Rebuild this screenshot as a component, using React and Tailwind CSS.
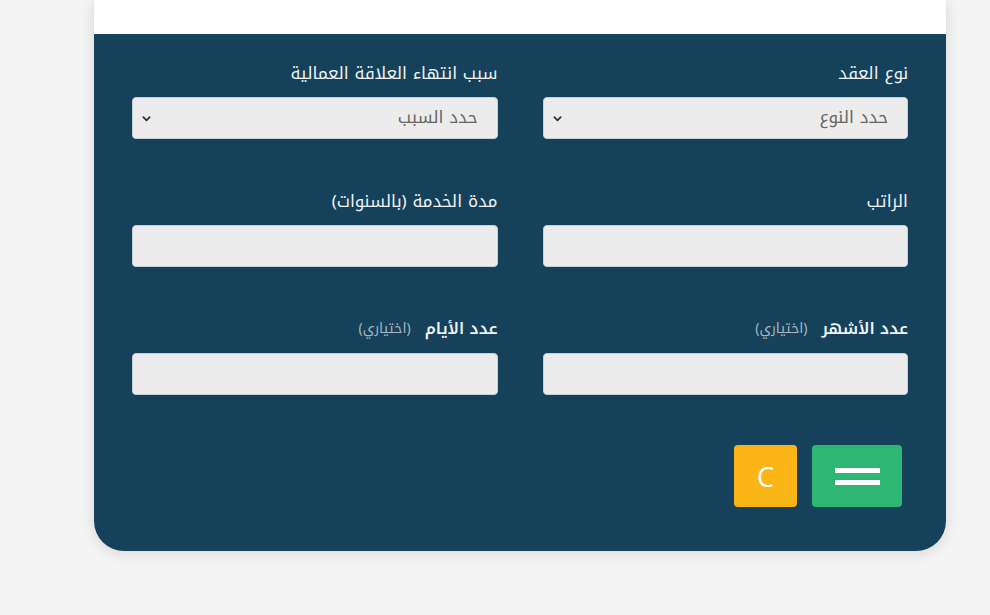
import React from 'react';

const font = { fontFamily: '"Noto Kufi Arabic", "Noto Sans Arabic", "DejaVu Sans", sans-serif' };

function Chevron() {
  return (
    <svg className="w-[9px] h-[9px] text-[#333]" viewBox="0 0 10 10" fill="none" stroke="currentColor">
      <path d="M1.5 3.5 5 7l3.5-3.5" strokeWidth={2} strokeLinecap="round" strokeLinejoin="round" />
    </svg>
  );
}

function Label({ text, optional }) {
  return (
    <div className="h-[20px] mb-[14px] flex items-center gap-[14px] text-[17px] leading-[20px] text-[#eef3f6]">
      <span className={optional ? 'font-semibold text-[16px]' : ''}>{text}</span>
      {optional && <span className="text-[14px] text-[#a9b6bf]">(اختياري)</span>}
    </div>
  );
}

function SelectField({ label, placeholder }) {
  return (
    <div>
      <Label text={label} />
      <div className="h-[42px] rounded-[4px] border border-[#c9ced2] bg-[#ececec] flex items-center justify-between pr-[19px] pl-[9px]">
        <span className="text-[17px] text-[#666]">{placeholder}</span>
        <Chevron />
      </div>
    </div>
  );
}

function InputField({ label, optional }) {
  return (
    <div>
      <Label text={label} optional={optional} />
      <input
        type="text"
        className="block w-full h-[42px] rounded-[4px] border border-[#c9ced2] bg-[#ececec] outline-none"
      />
    </div>
  );
}

export default function App() {
  return (
    <div className="min-h-screen bg-[#f4f4f4]" style={font}>
      <div className="ml-[94px] w-[852px] rounded-b-[30px] shadow-[0_2px_14px_rgba(0,0,0,0.12)] overflow-hidden">
        <div className="h-[34px] bg-white" />
        <div dir="rtl" className="bg-[#15415a] pt-[29px] pb-[44px] px-[38px]">
          <div className="grid grid-cols-2 gap-x-[45px] gap-y-[52px]">
            <SelectField label="نوع العقد" placeholder="حدد النوع" />
            <SelectField label="سبب انتهاء العلاقة العمالية" placeholder="حدد السبب" />
            <InputField label="الراتب" />
            <InputField label="مدة الخدمة (بالسنوات)" />
            <InputField label="عدد الأشهر" optional />
            <InputField label="عدد الأيام" optional />
          </div>
          <div className="mt-[50px] pr-[6px] flex gap-[15px]">
            <button className="w-[90px] h-[62px] rounded-[4px] bg-[#2eb673] flex flex-col items-center justify-center gap-[7px]">
              <span className="block w-[45px] h-[5px] bg-white" />
              <span className="block w-[45px] h-[5px] bg-white" />
            </button>
            <button
              className="w-[63px] h-[62px] rounded-[4px] bg-[#fbb416] text-white text-[27px] leading-none"
              style={{ fontFamily: '"Open Sans", sans-serif' }}
            >
              C
            </button>
          </div>
        </div>
      </div>
    </div>
  );
}
